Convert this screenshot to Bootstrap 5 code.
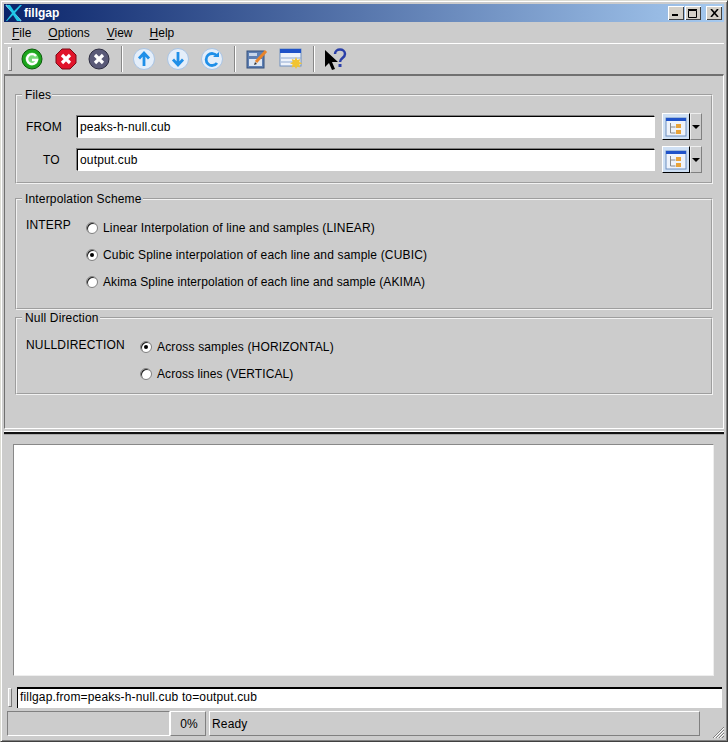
<!DOCTYPE html>
<html lang="en"><head><meta charset="utf-8"><title>fillgap</title>
<link href="https://cdn.jsdelivr.net/npm/bootstrap@5.3.0/dist/css/bootstrap.min.css" rel="stylesheet">
<style>
html,body{margin:0;height:742px;overflow:hidden;background:#ccc}
body{font-family:"Liberation Sans",Arial,sans-serif;font-size:12px;line-height:14px;letter-spacing:.16px;color:#000}
.win{height:742px;width:728px;background:#ccc;border:solid;border-width:1px;border-color:#dcdcd4 #404040 #404040 #dcdcd4;box-shadow:inset 1px 1px 0 #fff,inset -1px -1px 0 #808080;padding:3px 3px 0 3px}
.titlebar{height:18px;background:linear-gradient(90deg,#0a246a,#a6caf0);color:#fff;font-weight:700;font-size:12px;letter-spacing:0;padding-left:1px}
.ttext{margin-left:1px}
.wbtn{width:16px;height:14px;background:#d4d0c8;box-shadow:inset 1px 1px 0 #fff,inset -1px -1px 0 #404040;font-weight:700}
.menubar{height:22px;padding-left:8px;padding-top:1px;gap:17px;border-bottom:1px solid #fff;letter-spacing:0}
.menubar span u{text-decoration-thickness:1px;text-underline-offset:2px}
.tools{height:30px;padding-left:4px}
.grip{width:4px;background:#d8d8d8;border:1px solid;border-color:#fff #777 #777 #fff}
.tools .grip{height:24px;margin-right:3px}
.tbtn{width:33.7px;height:28px}
.tbtn.lastb{width:31px}
.vsep{width:2px;height:26px;border-left:1px solid #888;border-right:1px solid #fff;margin:0 4.500px 0 5px}
.toppanel{height:355px;border:1px solid;border-color:#707070 #fff #fff #707070;border-top-width:2px;padding:12px 10px 0 10px}
fieldset.grp{border:2px groove #f2f2f2;padding:0 9px}
fieldset.grp legend{float:none;width:auto;font-size:12px;line-height:14px;margin:0 0 0 -4px;padding:0 1px 0 3px;background:#ccc}
.fromrow{height:33px}
.flabel{width:51px}
.flabel.tolab{padding-left:17px}
.finput{flex:1;height:22px;background:#fff;border:1px solid;border-color:#000 #fff #fff #000;box-shadow:-1px -1px 0 #808080;padding:3px 2px;margin-right:7px}
.fbtn{width:28px;height:27px;background:#cfe0f4;border:1px solid;border-color:#fff #000 #000 #fff}
.farrow{width:12px;height:27px;background:#ccc;border:1px solid;border-color:#eee #808080 #808080 #eee;display:flex;align-items:center;justify-content:center}
.farrow i{display:block;width:0;height:0;border:4px solid transparent;border-top:4px solid #000;border-bottom:0}
.rlist{display:flex;flex-direction:column}
.ritem{height:27px;display:flex;align-items:center;gap:5px}
.lsa{letter-spacing:.08px}
.rdot{width:12px;height:12px;border-radius:50%;background:#fff;border:1px solid #808080;box-shadow:inset 1px 1px 0 #222;display:flex;align-items:center;justify-content:center;flex:none}
.rdot.on::after{content:"";width:4px;height:4px;border-radius:50%;background:#000}
fieldset.grp1{height:96px;margin:0 0 8px;padding-top:8px}
fieldset.grp2{height:118px;margin:0 0 1px;padding-top:8px}
fieldset.grp3{height:84px;margin:0;padding-top:8px}
.lab2{width:60px;padding-top:4px}
.lab3{width:114px;padding-top:5px}
.split{height:15px}
.split div{height:2px;background:#111;margin-top:3px;box-shadow:0 -1px 0 #fff,0 1px 0 #aaa}
.logbox{height:232px;margin:0 10px 0 9px;background:#fff;border:1px solid;border-color:#888 #eee #eee #888}
.cmdrow{height:21px;margin-top:11px;padding-left:4px;gap:5px;align-items:center}
.cmdrow .grip{height:19px}
.cmd{flex:1;height:21px;background:#fff;border-top:2px solid #000;border-left:1px solid #000;padding:1px 2px;margin-right:2px;white-space:nowrap}
.stat{height:27px;margin-top:3px;padding-left:3px;align-items:stretch}
.sbox{border:1px solid;border-color:#808080 #fff #fff #808080;display:flex;align-items:center;height:25px;padding-left:2px}
.s1{width:163px}
.s2{width:36px;border-color:#fff #808080 #808080 #fff;justify-content:center}
.s3{width:491px;margin-left:3px;border-color:#fff #808080 #808080 #fff}
.grow{position:absolute;right:2px;bottom:2px}
.wbtns{gap:1px;margin-right:2px}
</style></head><body>
<div class="win d-flex flex-column position-relative">
<div class="titlebar d-flex align-items-center">
<svg width="18" height="18" viewBox="0 0 18 18"><path d="M1 1l15 16" stroke="#bfefff" stroke-width="1.500"/><path d="M1 1h4l4 6 6-6h2l-7 8 6 8h-4L8 11l-6 6H1l6-8z" fill="#21c8e8"/></svg>
<span class="ttext">fillgap</span>
<span class="ms-auto d-flex wbtns">
<span class="wbtn d-flex justify-content-center align-items-end pb-1"><svg width="8" height="2"><rect width="6" height="2"/></svg></span>
<span class="wbtn d-flex justify-content-center align-items-center"><svg width="10" height="9"><path d="M.5 1.5h8v7h-8z" fill="none" stroke="#000"/><path d="M0 .5h9" stroke="#000" stroke-width="1.4"/></svg></span>
<span class="wbtn d-flex justify-content-center align-items-center ms-1"><svg width="9" height="8"><path d="M1 0l7 8M8 0l-7 8" stroke="#000" stroke-width="1.6"/></svg></span>
</span></div>
<div class="menubar d-flex align-items-center"><span><u>F</u>ile</span><span><u>O</u>ptions</span><span><u>V</u>iew</span><span><u>H</u>elp</span></div>
<div class="tools d-flex align-items-center">
<div class="grip"></div>
<div class="tbtn d-flex align-items-center justify-content-center"><svg width="22" height="22" viewBox="0 0 22 22"><circle cx="11" cy="11" r="10" fill="#1da51d" stroke="#0a5a0a"/><circle cx="11" cy="11" r="6.5" fill="#7ad97a"/><path d="M15 8a5 5 0 1 0 1 4h-5" fill="none" stroke="#fff" stroke-width="2.4"/></svg></div>
<div class="tbtn d-flex align-items-center justify-content-center"><svg width="22" height="22" viewBox="0 0 22 22"><path d="M7 1h8l6 6v8l-6 6H7l-6-6V7z" fill="#e0142a" stroke="#7a0a14"/><path d="M7 7l8 8M15 7l-8 8" stroke="#fff" stroke-width="3.2"/></svg></div>
<div class="tbtn d-flex align-items-center justify-content-center"><svg width="22" height="22" viewBox="0 0 22 22"><circle cx="11" cy="11" r="10" fill="#5a5a78" stroke="#2c2c40"/><path d="M7 7l8 8M15 7l-8 8" stroke="#fff" stroke-width="3.2"/></svg></div>
<div class="vsep"></div>
<div class="tbtn d-flex align-items-center justify-content-center"><svg width="24" height="24" viewBox="0 0 24 24"><circle cx="12" cy="12" r="10.5" fill="#e4eefa" stroke="#a9c4e4"/><path d="M12 19V7M7 11.5L12 6l5 5.500" fill="none" stroke="#1f8fe8" stroke-width="2.800"/></svg></div>
<div class="tbtn d-flex align-items-center justify-content-center"><svg width="24" height="24" viewBox="0 0 24 24"><circle cx="12" cy="12" r="10.5" fill="#e4eefa" stroke="#a9c4e4"/><path d="M12 5v12M7 12.500L12 18l5-5.500" fill="none" stroke="#1f8fe8" stroke-width="2.800"/></svg></div>
<div class="tbtn d-flex align-items-center justify-content-center"><svg width="24" height="24" viewBox="0 0 24 24"><circle cx="12" cy="12" r="10.5" fill="#e4eefa" stroke="#a9c4e4"/><path d="M17 9a6 6 0 1 0 0 7" fill="none" stroke="#1f8fe8" stroke-width="2.800"/><path d="M13 10h6V5z" fill="#1f8fe8"/></svg></div>
<div class="vsep"></div>
<div class="tbtn d-flex align-items-center justify-content-center"><svg width="24" height="22" viewBox="0 0 24 22"><rect x="2" y="3" width="17" height="17" fill="#5d7fb3" stroke="#35507c"/><rect x="4" y="5" width="8" height="3" fill="#c7d6ea"/><rect x="4" y="11" width="13" height="7" fill="#dde6f2"/><path d="M11 14L21 3" stroke="#e8842a" stroke-width="3"/><path d="M9 17l1-3 2 2z" fill="#333"/></svg></div>
<div class="tbtn d-flex align-items-center justify-content-center"><svg width="24" height="22" viewBox="0 0 24 22"><rect x="1" y="1" width="21" height="17" fill="#eef3fb" stroke="#6f8fc0"/><rect x="1" y="1" width="21" height="4" fill="#1f52c8"/><path d="M2 10h20M2 14h12" stroke="#8fa8d0"/><path d="M17 9l1.300 3 3-1-1 3 3 1.300-3 1.200 1 3-3-1L17 21l-1.300-2.500-3 1 1-3-2.700-1.200 2.700-1.300-1-3 3 1z" fill="#f2c431"/></svg></div>
<div class="vsep"></div>
<div class="tbtn lastb d-flex align-items-center justify-content-center"><svg width="26" height="24" viewBox="0 0 26 24"><path d="M3 3v17l4-4 3 7 3-1-3-7h6z" fill="#000"/><path d="M13 7c0-6 10-6 10 0 0 4-5 4-5 8" fill="none" stroke="#2a3fa8" stroke-width="2.500"/><rect x="16.500" y="17" width="3" height="3" fill="#2a3fa8"/></svg></div>
</div>
<div class="toppanel">
<fieldset class="grp grp1"><legend>Files</legend>
<div class="fromrow d-flex align-items-center"><div class="flabel">FROM</div><div class="finput">peaks-h-null.cub</div><div class="fbtn d-flex align-items-center justify-content-center"><svg width="22" height="20" viewBox="0 0 22 20"><rect x="1" y="1" width="20" height="18" fill="#eef3fb" stroke="#6f8fc0"/><rect x="1" y="1" width="20" height="3" fill="#1f52c8"/><path d="M5.500 6v10h5M5.500 10h5" stroke="#888" fill="none"/><rect x="11" y="7" width="5" height="4" fill="#e8a33a"/><rect x="11" y="13" width="5" height="4" fill="#e8a33a"/></svg></div><div class="farrow"><i></i></div></div>
<div class="fromrow d-flex align-items-center"><div class="flabel tolab">TO</div><div class="finput">output.cub</div><div class="fbtn d-flex align-items-center justify-content-center"><svg width="22" height="20" viewBox="0 0 22 20"><rect x="1" y="1" width="20" height="18" fill="#eef3fb" stroke="#6f8fc0"/><rect x="1" y="1" width="20" height="3" fill="#1f52c8"/><path d="M5.500 6v10h5M5.500 10h5" stroke="#888" fill="none"/><rect x="11" y="7" width="5" height="4" fill="#e8a33a"/><rect x="11" y="13" width="5" height="4" fill="#e8a33a"/></svg></div><div class="farrow"><i></i></div></div>
</fieldset>
<fieldset class="grp grp2"><legend>Interpolation Scheme</legend>
<div class="d-flex"><div class="lab2">INTERP</div><div class="rlist">
<label class="ritem"><span class="rdot"></span>Linear Interpolation of line and samples (LINEAR)</label>
<label class="ritem"><span class="rdot on"></span>Cubic Spline interpolation of each line and sample (CUBIC)</label>
<label class="ritem lsa"><span class="rdot"></span>Akima Spline interpolation of each line and sample (AKIMA)</label>
</div></div></fieldset>
<fieldset class="grp grp3"><legend>Null Direction</legend>
<div class="d-flex"><div class="lab3">NULLDIRECTION</div><div class="rlist">
<label class="ritem"><span class="rdot on"></span>Across samples (HORIZONTAL)</label>
<label class="ritem lsa"><span class="rdot"></span>Across lines (VERTICAL)</label>
</div></div></fieldset>
</div>
<div class="split"><div></div></div>
<div class="logbox"></div>
<div class="cmdrow d-flex"><div class="grip"></div><div class="cmd">fillgap.from=peaks-h-null.cub to=output.cub</div></div>
<div class="stat d-flex">
<div class="sbox s1"></div>
<div class="sbox s2">0%</div>
<div class="sbox s3">Ready</div>
</div>
<svg class="grow" width="14" height="14" viewBox="0 0 14 14"><path d="M13 2L2 13M13 5l-8 8M13 8l-5 5M13 11l-2 2" stroke="#808080"/><path d="M13 3L3 13M13 6l-7 7M13 9l-4 4" stroke="#fff"/></svg>
</div>
</body></html>
